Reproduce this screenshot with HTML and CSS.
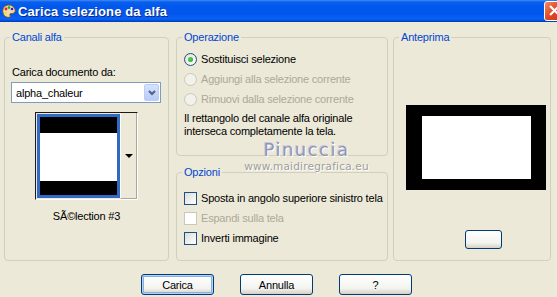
FILE: index.html
```html
<!DOCTYPE html>
<html lang="it">
<head>
    <meta charset="UTF-8">
    <title>Carica selezione da alfa</title>
    <link rel="stylesheet" href="styles.css">
</head>
<body>
    <div class="window">
        <div class="titlebar">
            <svg class="app-icon" width="14" height="15" viewBox="0 0 14 15">
                <path d="M7 1 C2 1 0 5 1 9 C2 13 6 14 8 13 C9 12 7 11 8 10 C9 9 12 10 13 8 C14 5 11 1 7 1 Z" fill="#f2d9a6" stroke="#7a5a2a" stroke-width="1"/>
                <circle cx="4" cy="5" r="1.4" fill="#e22"/>
                <circle cx="7" cy="3.6" r="1.3" fill="#2a2"/>
                <circle cx="10" cy="5" r="1.3" fill="#22e"/>
                <circle cx="3.6" cy="9" r="1.3" fill="#ed2"/>
            </svg>
            <span class="title">Carica selezione da alfa</span>
            <div class="close-btn">
                <svg width="21" height="20" viewBox="0 0 21 20">
                    <path d="M6 5 L15 14 M15 5 L6 14" stroke="#fff" stroke-width="2.2"/>
                </svg>
            </div>
        </div>

        <div class="dialog">
            <div class="groups">
                <fieldset class="group group-channels">
                    <legend>Canali alfa</legend>
                    <div class="field-label">Carica documento da:</div>
                    <div class="select">
                        <span class="select-value">alpha_chaleur</span>
                        <span class="select-btn">
                            <svg width="8" height="6" viewBox="0 0 8 6">
                                <path d="M1 1 L4 4 L7 1" fill="none" stroke="#4d6185" stroke-width="2"/>
                            </svg>
                        </span>
                    </div>
                    <div class="thumb-picker">
                        <div class="thumb"><div class="thumb-img"></div></div>
                        <div class="thumb-arrow"><span class="tri"></span></div>
                    </div>
                    <div class="thumb-caption">SÃ©lection #3</div>
                </fieldset>

                <div class="middle">
                    <fieldset class="group group-op">
                        <legend>Operazione</legend>
                        <div class="row"><span class="radio checked"></span>Sostituisci selezione</div>
                        <div class="row disabled"><span class="radio"></span>Aggiungi alla selezione corrente</div>
                        <div class="row disabled"><span class="radio"></span>Rimuovi dalla selezione corrente</div>
                        <p class="note">Il rettangolo del canale alfa originale<br>interseca completamente la tela.</p>
                    </fieldset>
                    <fieldset class="group group-opts">
                        <legend>Opzioni</legend>
                        <div class="row"><span class="check"></span>Sposta in angolo superiore sinistro tela</div>
                        <div class="row disabled"><span class="check"></span>Espandi sulla tela</div>
                        <div class="row"><span class="check"></span>Inverti immagine</div>
                    </fieldset>
                </div>

                <fieldset class="group group-preview">
                    <legend>Anteprima</legend>
                    <div class="preview"></div>
                    <div class="btn btn-small"></div>
                </fieldset>
            </div>

            <div class="buttons">
                <div class="btn btn-default">Carica</div>
                <div class="btn">Annulla</div>
                <div class="btn">?</div>
            </div>
        </div>

        <div class="watermark">
            <div class="wm-name">Pinuccia</div>
            <div class="wm-url">www.maidiregrafica.eu</div>
        </div>
    </div>
</body>
</html>
```

FILE: styles.css
```css
body {
    margin: 0;
    background: #ece9d8;
    font-family: "Liberation Sans", Arial, sans-serif;
    font-size: 11px;
    letter-spacing: -0.2px;
    color: #000;
    overflow: hidden;
}
.window {
    position: relative;
    width: 557px;
    height: 297px;
    overflow: hidden;
}

/* title bar */
.titlebar {
    height: 22px;
    display: flex;
    align-items: center;
    background: linear-gradient(#3d8bf7 0, #0a5fea 2px, #0058ee 6px, #0056ea 14px, #0b62f4 19px, #0049d0 21px, #003ab8 22px);
    color: #fff;
}
.app-icon {
    margin-left: 2px;
    margin-right: 2px;
}
.title {
    font-weight: bold;
    font-size: 13px;
    text-shadow: 1px 1px 0 #0a2a8a;
    letter-spacing: 0.1px;
}
.close-btn {
    margin-left: auto;
    margin-right: -8px;
    width: 21px;
    height: 20px;
    border: 1px solid #fff;
    border-radius: 3px;
    background: linear-gradient(135deg, #f0896a, #e0481f 50%, #c93a10);
    box-sizing: border-box;
}
.close-btn svg {
    display: block;
    margin: -1px;
}

/* dialog */
.dialog {
    padding: 8px 6px 0 4px;
}
.groups {
    display: flex;
}
.group {
    box-sizing: border-box;
    margin: 0;
    border: 1px solid #d0d0bf;
    border-radius: 4px;
    padding: 0 7px;
    min-width: 0;
}
.group legend {
    color: #0046d5;
    padding: 0 2px;
    margin-left: -2px;
    line-height: 14px;
}
.group-channels {
    width: 165px;
    height: 231px;
    padding-top: 21px;
}
.middle {
    width: 212px;
    margin-left: 7px;
    display: flex;
    flex-direction: column;
    gap: 9px;
}
.group-op {
    height: 126px;
    padding-top: 5px;
}
.group-opts {
    height: 96px;
    padding-top: 9px;
}
.group-preview {
    width: 158px;
    height: 231px;
    margin-left: 5px;
}

/* canali alfa */
.field-label {
    line-height: 14px;
}
.select {
    margin: 3px 0 0 -1px;
    width: 150px;
    height: 21px;
    box-sizing: border-box;
    border: 1px solid #7f9db9;
    background: #fff;
    display: flex;
    align-items: center;
}
.select-value {
    padding-left: 4px;
    flex: 1;
}
.select-btn {
    width: 15px;
    height: 17px;
    margin-right: 1px;
    border-radius: 2px;
    background: linear-gradient(#d6e3fd, #b6cbf8);
    border: 1px solid #b9cdf5;
    box-sizing: border-box;
    display: flex;
    align-items: center;
    justify-content: center;
}
.thumb-picker {
    margin: 9px auto 0;
    width: 103px;
    height: 88px;
    box-sizing: border-box;
    border: 1px solid;
    border-color: #1a1a1a #fff #fff #1a1a1a;
    display: flex;
    background: #ece9d8;
}
.thumb {
    width: 83px;
    height: 84px;
    box-sizing: border-box;
    border: 3px solid #316ac5;
    margin: 1px 0 0 1px;
}
.thumb-img {
    height: 100%;
    box-sizing: border-box;
    background: #fff;
    border-top: 16px solid #000;
    border-bottom: 14px solid #000;
}
.thumb-arrow {
    flex: 1;
    display: flex;
    align-items: center;
    justify-content: center;
    border-left: 1px solid #fff;
    border-right: 1px solid #aca899;
    border-bottom: 1px solid #aca899;
}
.tri {
    width: 0;
    height: 0;
    border-left: 4px solid transparent;
    border-right: 4px solid transparent;
    border-top: 4px solid #000;
}
.thumb-caption {
    margin-top: 9px;
    text-align: center;
    line-height: 14px;
}

/* radios and checkboxes */
.row {
    height: 20px;
    display: flex;
    align-items: center;
    white-space: nowrap;
}
.row.disabled {
    color: #aca899;
}
.radio {
    flex-shrink: 0;
    width: 13px;
    height: 13px;
    box-sizing: border-box;
    border: 1px solid #1c5180;
    border-radius: 50%;
    background: radial-gradient(circle at 65% 65%, #fff, #dcdcd7);
    margin-right: 4px;
    display: flex;
    align-items: center;
    justify-content: center;
}
.radio.checked::after {
    content: "";
    width: 5px;
    height: 5px;
    border-radius: 50%;
    background: radial-gradient(circle at 40% 40%, #55d355, #21a121);
}
.row.disabled .radio {
    border-color: #cac8bb;
    background: #f2f1ea;
}
.check {
    flex-shrink: 0;
    width: 13px;
    height: 13px;
    box-sizing: border-box;
    border: 1px solid #1c5180;
    background: linear-gradient(135deg, #dcdcd7, #fff);
    margin-right: 4px;
}
.row.disabled .check {
    border-color: #cac8bb;
    background: #fff;
}
.note {
    margin: 3px 0 0;
    line-height: 13px;
}

/* anteprima */
.preview {
    margin: 61px 0 0 5px;
    width: 140px;
    height: 85px;
    box-sizing: border-box;
    background: #fff;
    border-style: solid;
    border-color: #000;
    border-width: 11px 15px 11px 16px;
}

/* buttons */
.buttons {
    margin-top: 13px;
    display: flex;
    gap: 26px;
    padding-left: 137px;
}
.btn {
    width: 73px;
    height: 21px;
    box-sizing: border-box;
    border: 1px solid #003c74;
    border-radius: 3px;
    background: linear-gradient(#fff, #f3f3ef 70%, #d6d0c5);
    display: flex;
    align-items: center;
    justify-content: center;
}
.btn-default {
    box-shadow: inset 0 0 0 1px #b7d1f5, inset 0 0 0 2px #89ade4;
}
.btn-small {
    width: 37px;
    height: 19px;
    margin: 40px 0 0 64px;
}

/* watermark overlay */
.watermark {
    position: absolute;
    left: 244px;
    top: 139px;
    width: 125px;
    text-align: center;
    pointer-events: none;
}
.wm-name {
    font-family: "DejaVu Sans", sans-serif;
    font-size: 18px;
    letter-spacing: 1.5px;
    line-height: 21px;
    color: #9196b6;
    text-shadow: 1px 1px 0 #fff, -1px -1px 0 #c9c9d8;
}
.wm-url {
    font-family: "DejaVu Sans", sans-serif;
    font-size: 10.5px;
    letter-spacing: 0.2px;
    line-height: 12px;
    color: #9d9d9d;
    text-shadow: 1px 1px 0 #fff;
}
```
